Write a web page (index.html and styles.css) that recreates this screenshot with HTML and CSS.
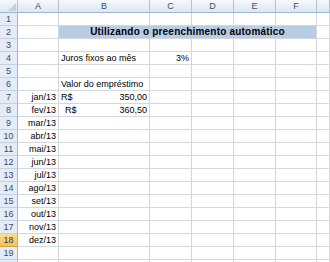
FILE: index.html
```html
<!DOCTYPE html>
<html lang="pt-BR">
<head>
    <meta charset="UTF-8">
    <title>Planilha</title>
    <link rel="stylesheet" href="styles.css">
</head>
<body>
    <div class="sheet">
        <!-- cabeçalho das colunas -->
        <div class="row head">
            <div class="corner"><span class="tri"></span></div>
            <div>A</div><div>B</div><div>C</div><div>D</div><div>E</div><div>F</div><div></div>
        </div>

        <div class="row"><div class="rh">1</div><div></div><div></div><div></div><div></div><div></div><div></div><div></div></div>
        <div class="row"><div class="rh">2</div><div></div><div class="title">Utilizando o preenchimento automático</div><div></div></div>
        <div class="row"><div class="rh">3</div><div></div><div></div><div></div><div></div><div></div><div></div><div></div></div>
        <div class="row"><div class="rh">4</div><div></div><div>Juros fixos ao mês</div><div class="num">3%</div><div></div><div></div><div></div><div></div></div>
        <div class="row"><div class="rh">5</div><div></div><div></div><div></div><div></div><div></div><div></div><div></div></div>
        <div class="row"><div class="rh">6</div><div></div><div>Valor do empréstimo</div><div></div><div></div><div></div><div></div><div></div></div>
        <div class="row"><div class="rh">7</div><div class="num">jan/13</div><div class="money"><span>R$</span><span>350,00</span></div><div></div><div></div><div></div><div></div><div></div></div>
        <div class="row"><div class="rh">8</div><div class="num">fev/13</div><div class="money ind"><span>R$</span><span>360,50</span></div><div></div><div></div><div></div><div></div><div></div></div>
        <div class="row"><div class="rh">9</div><div class="num">mar/13</div><div></div><div></div><div></div><div></div><div></div><div></div></div>
        <div class="row"><div class="rh">10</div><div class="num">abr/13</div><div></div><div></div><div></div><div></div><div></div><div></div></div>
        <div class="row"><div class="rh">11</div><div class="num">mai/13</div><div></div><div></div><div></div><div></div><div></div><div></div></div>
        <div class="row"><div class="rh">12</div><div class="num">jun/13</div><div></div><div></div><div></div><div></div><div></div><div></div></div>
        <div class="row"><div class="rh">13</div><div class="num">jul/13</div><div></div><div></div><div></div><div></div><div></div><div></div></div>
        <div class="row"><div class="rh">14</div><div class="num">ago/13</div><div></div><div></div><div></div><div></div><div></div><div></div></div>
        <div class="row"><div class="rh">15</div><div class="num">set/13</div><div></div><div></div><div></div><div></div><div></div><div></div></div>
        <div class="row"><div class="rh">16</div><div class="num">out/13</div><div></div><div></div><div></div><div></div><div></div><div></div></div>
        <div class="row"><div class="rh">17</div><div class="num">nov/13</div><div></div><div></div><div></div><div></div><div></div><div></div></div>
        <div class="row"><div class="rh sel">18</div><div class="num">dez/13</div><div></div><div></div><div></div><div></div><div></div><div></div></div>
        <div class="row"><div class="rh">19</div><div></div><div></div><div></div><div></div><div></div><div></div><div></div></div>
        <div class="row"><div class="rh"></div><div></div><div></div><div></div><div></div><div></div><div></div><div></div></div>
    </div>
</body>
</html>
```

FILE: styles.css
```css
body {
    margin: 0;
    background: #fff;
    font-family: "Liberation Sans", Arial, sans-serif;
    font-size: 9px;
    color: #000;
    overflow: hidden;
}
.sheet {
    width: 330px;
}
.row {
    display: grid;
    grid-template-columns: 18px 41px 91px 42px 42px 42px 41px 1fr;
    height: 13px;
}
.row > div {
    box-sizing: border-box;
    border-right: 1px solid #d4d8de;
    border-bottom: 1px solid #d4d8de;
    line-height: 12px;
    padding: 0 2px;
    white-space: nowrap;
    overflow: hidden;
}
.head > div {
    background: linear-gradient(#f6f9fc, #dde6f1);
    border-right: 1px solid #b1c2d7;
    border-bottom: 1px solid #9eb6ce;
    color: #3c4d63;
    text-align: center;
}
.corner {
    position: relative;
}
.corner .tri {
    position: absolute;
    right: 1px;
    bottom: 1px;
    width: 0;
    height: 0;
    border-left: 8px solid transparent;
    border-bottom: 8px solid #c3cfdd;
}
.row > .rh {
    background: #e4ecf7;
    border-right: 1px solid #9eb6ce;
    border-bottom: 1px solid #c5d1e0;
    color: #3c4d63;
    text-align: center;
    padding: 0;
}
.row > .sel {
    background: linear-gradient(#f9dc8e, #f1c15f);
    border-bottom-color: #d9a43a;
    color: #3b3b3b;
}
.row > .title {
    grid-column: 3 / 8;
    background: #b8cce4;
    font-size: 10px;
    font-weight: bold;
    letter-spacing: 0.2px;
    text-align: center;
}
.num {
    text-align: right;
}
.money {
    display: flex;
    justify-content: space-between;
}
.ind {
    padding-left: 6px !important;
}
```
